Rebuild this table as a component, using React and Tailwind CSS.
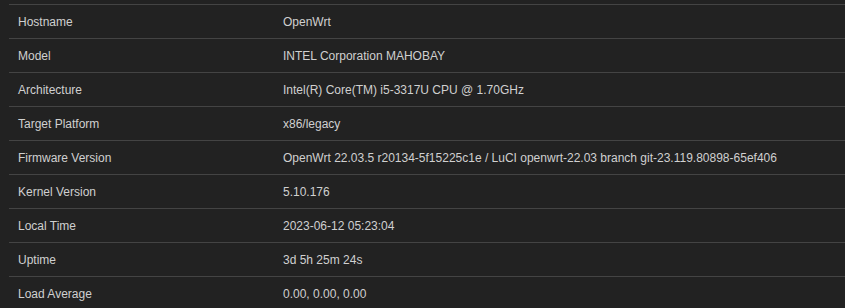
export default function App() {
  const rows = [
    ["Hostname", "OpenWrt"],
    ["Model", "INTEL Corporation MAHOBAY"],
    ["Architecture", "Intel(R) Core(TM) i5-3317U CPU @ 1.70GHz"],
    ["Target Platform", "x86/legacy"],
    ["Firmware Version", "OpenWrt 22.03.5 r20134-5f15225c1e / LuCI openwrt-22.03 branch git-23.119.80898-65ef406"],
    ["Kernel Version", "5.10.176"],
    ["Local Time", "2023-06-12 05:23:04"],
    ["Uptime", "3d 5h 25m 24s"],
    ["Load Average", "0.00, 0.00, 0.00"],
  ];
  return (
    <div className="w-[845px] h-[308px] overflow-hidden bg-[#222222] pl-[9px] pt-[4px]" style={{ fontFamily: '"Liberation Sans", Arial, sans-serif' }}>
      {rows.map(([k, v]) => (
        <div key={k} className="flex h-[34px] border-t border-[#444444] items-center text-[12px] text-[#d0d0d0]">
          <div className="w-[274px] pl-[9px]">{k}</div>
          <div>{v}</div>
        </div>
      ))}
    </div>
  );
}
